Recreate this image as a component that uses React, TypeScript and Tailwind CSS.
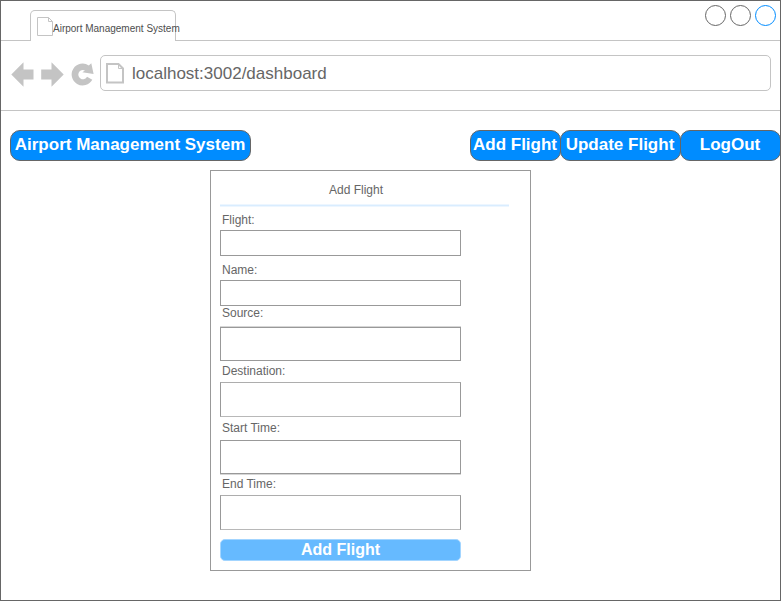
import React from "react";

type FieldProps = { label: string; gap: string; labelClass: string; box: string };

const fields: FieldProps[] = [
  { label: "Flight:", gap: "h-[24px]", labelClass: "pt-[7px]", box: "h-[26px]" },
  { label: "Name:", gap: "h-[24px]", labelClass: "pt-[7px]", box: "h-[26px]" },
  { label: "Source:", gap: "h-[21px]", labelClass: "pt-0", box: "h-[34px] shadow-[0_-1px_0_#d6d6d6]" },
  { label: "Destination:", gap: "h-[21px]", labelClass: "pt-[3px]", box: "h-[35px] border-t-[#adadad] border-b-[#b8b8b8]" },
  { label: "Start Time:", gap: "h-[23px]", labelClass: "pt-[4px]", box: "h-[34px] shadow-[0_1px_0_#d6d6d6]" },
  { label: "End Time:", gap: "h-[21px]", labelClass: "pt-[3px]", box: "h-[35px] border-t-[#adadad] border-b-[#b8b8b8]" },
];

function Field({ label, gap, labelClass, box }: FieldProps) {
  return (
    <label className="block w-[241px]">
      <span className={`block pl-[2px] leading-[14px] ${gap} ${labelClass}`}>{label}</span>
      <input className={`block w-full border border-[#999] bg-white outline-none ${box}`} />
    </label>
  );
}

function NavButton({ children, width }: { children: React.ReactNode; width: string }) {
  return (
    <button
      className={`flex h-[31px] shrink-0 items-center justify-center whitespace-nowrap rounded-[10px] border border-[#666] bg-[#008cff] pr-px pb-px text-[17px] font-bold leading-[20px] text-white ${width}`}
    >
      {children}
    </button>
  );
}

export default function App() {
  return (
    <div className="flex h-[601px] w-[781px] flex-col overflow-hidden border border-[#666] bg-white font-['Liberation_Sans',Arial,sans-serif] text-[12px] text-[#666]">
      <header className="flex h-[40px] items-end">
        <div className="h-full w-[29px] border-b border-[#c4c4c4]" />
        <div className="flex h-[31px] w-[146px] rounded-t-[5px] border border-b-0 border-[#c4c4c4] pl-[6px] pt-[6px]">
          <svg width="16" height="19" viewBox="0 0 16 19" fill="none" stroke="#c4c4c4" className="shrink-0">
            <path d="M.5.5H11.5L15.5 4.5V18.5H.5ZM11.5.5V4.5H15.5" />
          </svg>
          <span className="whitespace-nowrap pt-[6px] text-[10px] leading-[12px] text-[#4d4d4d]">Airport Management System</span>
        </div>
        <div className="flex h-full flex-1 justify-end gap-[4px] border-b border-[#c4c4c4] pr-[4px] pt-[4px]">
          <span className="size-[21px] rounded-full border border-[#666]" />
          <span className="size-[21px] rounded-full border border-[#666]" />
          <span className="size-[21px] rounded-full border border-[#008cff]" />
        </div>
      </header>

      <div className="flex h-[70px] border-b border-[#c4c4c4] pl-[10px] pr-[9px] pt-[14px]">
        <svg width="89" height="36" viewBox="11 55 89 36" fill="#c4c4c4" className="shrink-0">
          <path d="M11.3 74.5L23.5 62.3V69.5H33.5V79.5H23.5V86.7Z" />
          <path d="M63.7 74.5L51.5 62.3V69.5H41.2V79.5H51.5V86.7Z" />
          <path d="M91.3 63.3L93.6 74L82.3 72.3L85 70.6A4.6 4.6 0 1 0 87 76.8L92.3 79.8A11 11 0 1 1 88.8 65.4Z" />
        </svg>
        <div className="flex h-[36px] flex-1 items-center rounded-[5px] border border-[#c4c4c4]">
          <svg width="18" height="21" viewBox="0 0 18 21" fill="none" stroke="#c4c4c4" strokeWidth="2" className="ml-[5px] mr-[8px]">
            <path d="M1 1H12.5L17 5.5V19.5H1Z" />
            <path d="M12.5 1V5.5H17" strokeWidth="1" />
          </svg>
          <span className="pt-[2px] text-[17px] leading-[20px]">localhost:3002/dashboard</span>
        </div>
      </div>

      <nav className="flex h-[50px] shrink-0 justify-between pl-[9px] pt-[19px]">
        <NavButton width="w-[241px]">Airport Management System</NavButton>
        <div className="-mr-px flex">
          <NavButton width="w-[91px]">Add Flight</NavButton>
          <NavButton width="w-[121px] -ml-px">Update Flight</NavButton>
          <NavButton width="w-[101px] -ml-px">LogOut</NavButton>
        </div>
      </nav>

      <main className="ml-[209px] mt-[9px] h-[401px] w-[321px] shrink-0 border border-[#999] pl-[9px]">
        <h1 className="h-[33px] w-[272px] pt-[12px] text-center leading-[14px]">Add Flight</h1>
        <div className="h-[3px] w-[289px] border-y border-[#edf6ff] bg-[#d9edff]" />
        <div className="-mt-px">
          {fields.map((f) => (
            <Field key={f.label} {...f} />
          ))}
        </div>
        <button className="mt-[9px] flex h-[22px] w-[241px] items-center justify-center rounded-[5px] border border-[#a3d5ff] bg-[#66baff] pb-px text-[16px] font-bold leading-[18px] text-white">
          Add Flight
        </button>
      </main>
    </div>
  );
}
